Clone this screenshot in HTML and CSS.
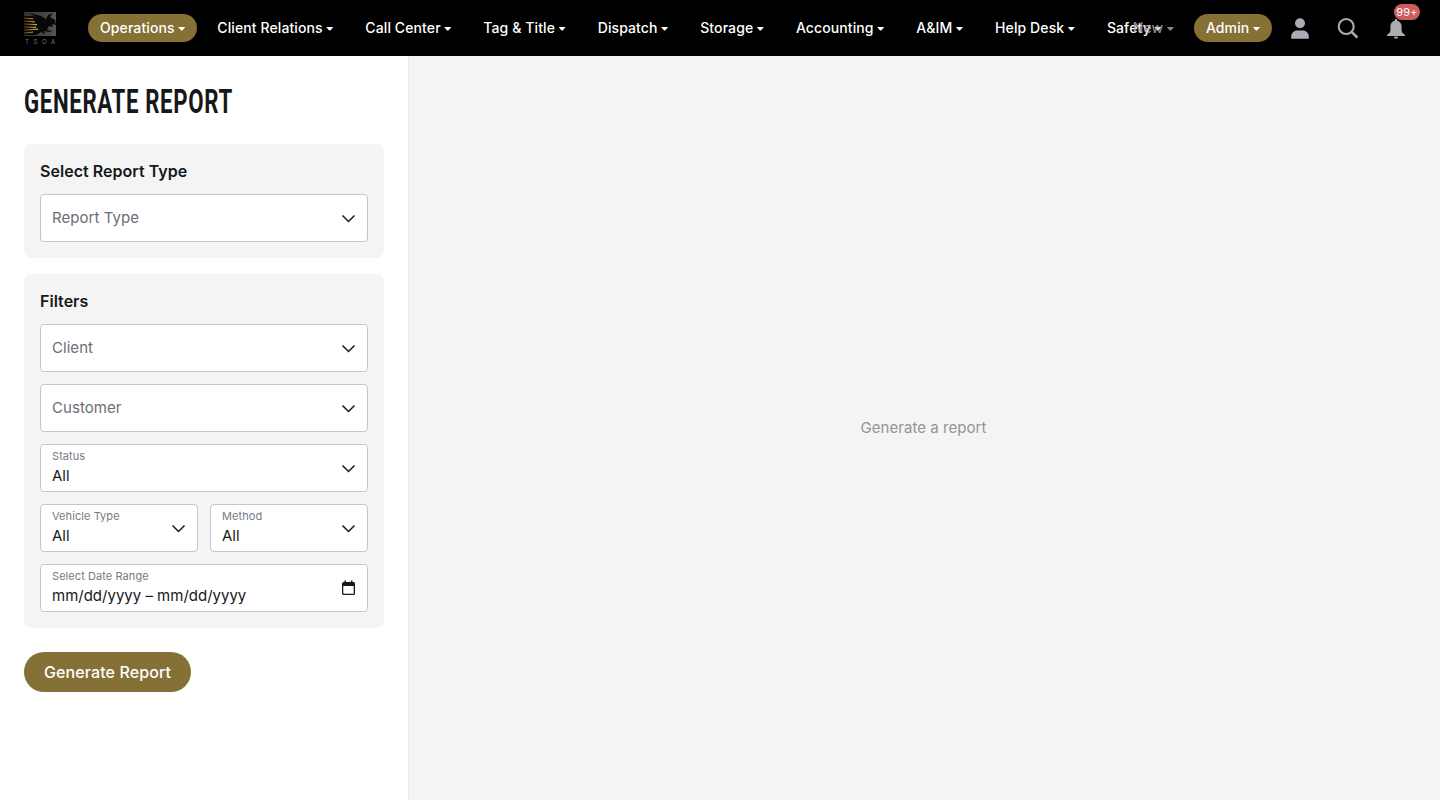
FILE: index.html
```
<!DOCTYPE html>
<html lang="en">
<head>
    <meta charset="UTF-8">
    <meta name="viewport" content="width=device-width, initial-scale=1.0">
    <title>Generate Report</title>
    <link rel="stylesheet" href="styles.css">
</head>
<body>
    <header class="topbar">
        <a class="logo" href="#">
            <svg width="32" height="24" viewBox="0 0 32 24">
                <defs>
                    <linearGradient id="logo-bg"><stop offset="0" stop-color="#303030"/><stop offset="1" stop-color="#545454"/></linearGradient>
                    <linearGradient id="logo-gold" gradientUnits="userSpaceOnUse" x1="0" y1="0" x2="15" y2="0"><stop offset="0" stop-color="#5c4018"/><stop offset=".7" stop-color="#c0933c"/><stop offset="1" stop-color="#dcc48c"/></linearGradient>
                </defs>
                <path fill="url(#logo-bg)" d="M0 0h32v24H0z"/>
                <path fill="#080808" d="M0 4h10L5 1l12 3 5 3 2-4 5-2-3 4 5 3 1 5-4-1 1 3-4-1-2 4 5 1-2 1-6-1 1 3-4-2-5 3H0z"/>
                <path fill="none" stroke="url(#logo-gold)" stroke-width="1.2" d="M0 6l9 .8M0 9l11 .8M0 12l13 .6M0 15l12 .4M0 18l14-.8M0 21l9-.9"/>
            </svg>
            <span class="logo-text">TSOA</span>
        </a>
        <nav class="nav">
            <a class="nav-item active" href="#">Operations</a>
            <a class="nav-item" href="#">Client Relations</a>
            <a class="nav-item" href="#">Call Center</a>
            <a class="nav-item" href="#">Tag &amp; Title</a>
            <a class="nav-item" href="#">Dispatch</a>
            <a class="nav-item" href="#">Storage</a>
            <a class="nav-item" href="#">Accounting</a>
            <a class="nav-item" href="#">A&amp;IM</a>
            <a class="nav-item" href="#">Help Desk</a>
            <a class="nav-item" href="#">Safety</a>
        </nav>
        <div class="tools">
            <a class="nav-item muted" href="#">New</a>
            <a class="nav-item active" href="#">Admin</a>
            <a class="tool" href="#">
                <svg width="24" height="24" viewBox="0 0 24 24" fill="#a9acb2">
                    <circle cx="12" cy="7.3" r="5"/>
                    <path d="M3.2 22.7v-1.9c0-3.8 2.5-6.3 6-6.3h5.6c3.5 0 6 2.5 6 6.3v1.9z"/>
                </svg>
            </a>
            <a class="tool" href="#">
                <svg width="24" height="24" viewBox="0 0 24 24" fill="none" stroke="#a9acb2" stroke-width="2.1">
                    <circle cx="10.2" cy="10.5" r="7.5"/>
                    <path stroke-width="2.6" d="M15.3 15.6l6.1 6.1"/>
                </svg>
            </a>
            <a class="tool" href="#">
                <svg width="24" height="24" viewBox="0 0 24 24" fill="#a9acb2">
                    <path d="M12 3c.8 0 1.3.5 1.3 1.3v.4c2.6.6 4.3 2.7 4.3 5.6v4.2c0 1.6 1 2.4 2.4 3.6.8.7 1 1.1 1 1.9H3c0-.8.2-1.2 1-1.9 1.400-1.200 2.400-2 2.400-3.600v-4.200c0-2.900 1.700-5 4.300-5.600v-.4C10.700 3.500 11.200 3 12 3zM9.700 20.800h4.600c-.2 1.300-1.100 2-2.300 2s-2.100-.7-2.300-2z"/>
                </svg>
                <span class="badge">99+</span>
            </a>
        </div>
    </header>
    <main class="page">
        <aside class="sidebar">
            <h1><span>GENERATE REPORT</span></h1>
            <section class="card">
                <h2>Select Report Type</h2>
                <div class="field">
                    <span class="placeholder">Report Type</span>
                    <svg class="chevron" viewBox="0 0 16 16"><path d="M2.5 5.5l6 6 6-6"/></svg>
                </div>
            </section>
            <section class="card">
                <h2>Filters</h2>
                <div class="field">
                    <span class="placeholder">Client</span>
                    <svg class="chevron" viewBox="0 0 16 16"><path d="M2.5 5.5l6 6 6-6"/></svg>
                </div>
                <div class="field">
                    <span class="placeholder">Customer</span>
                    <svg class="chevron" viewBox="0 0 16 16"><path d="M2.5 5.5l6 6 6-6"/></svg>
                </div>
                <div class="field">
                    <div class="labeled"><label>Status</label><span>All</span></div>
                    <svg class="chevron" viewBox="0 0 16 16"><path d="M2.5 5.5l6 6 6-6"/></svg>
                </div>
                <div class="row">
                    <div class="field">
                        <div class="labeled"><label>Vehicle Type</label><span>All</span></div>
                        <svg class="chevron" viewBox="0 0 16 16"><path d="M2.5 5.5l6 6 6-6"/></svg>
                    </div>
                    <div class="field">
                        <div class="labeled"><label>Method</label><span>All</span></div>
                        <svg class="chevron" viewBox="0 0 16 16"><path d="M2.5 5.5l6 6 6-6"/></svg>
                    </div>
                </div>
                <div class="field">
                    <div class="labeled"><label>Select Date Range</label><span>mm/dd/yyyy – mm/dd/yyyy</span></div>
                    <svg class="calendar" width="13" height="16" viewBox="0 0 13 16">
                        <path fill="#171819" fill-rule="evenodd" d="M2.5.5H4V2h5V.5h1.5V2h1A1.5 1.5 0 0 1 13 3.5v10a1.5 1.5 0 0 1-1.5 1.5h-10A1.5 1.5 0 0 1 0 13.5v-10A1.5 1.5 0 0 1 1.5 2h1zM1.300 6v7.700h10.400V6z"/>
                    </svg>
                </div>
            </section>
            <button class="submit" type="button">Generate Report</button>
        </aside>
        <section class="content">Generate a report</section>
    </main>
</body>
</html>
```
FILE: styles.css
```
* {
    box-sizing: border-box;
}
body {
    font-family: Inter, "Liberation Sans", sans-serif;
    font-size: 15px;
    color: #171819;
    background: #fff;
    margin: 0;
    height: 100vh;
    display: flex;
    flex-direction: column;
    overflow: hidden;
}
a {
    text-decoration: none;
}
.topbar {
    height: 56px;
    background: #000;
    display: flex;
    align-items: center;
    padding: 0 24px;
    flex: none;
}
.logo {
    width: 32px;
    height: 32px;
    margin-right: 32px;
    flex: none;
}
.logo svg {
    display: block;
}
.logo-text {
    display: block;
    font-size: 6px;
    line-height: 7px;
    padding: 2px 0 0 1px;
    letter-spacing: 4.6px;
    color: #777;
    white-space: nowrap;
}
.nav {
    display: flex;
    gap: 8px;
    flex: 1;
    min-width: 0;
}
.nav-item {
    display: flex;
    align-items: center;
    height: 28px;
    padding: 0 12px 1px;
    border-radius: 14px;
    color: #fff;
    font-size: 14px;
    font-weight: 500;
    letter-spacing: 0.1px;
    white-space: nowrap;
    flex: none;
}
.nav-item::after {
    content: "";
    width: 7.2px;
    height: 4px;
    margin: 2px 0 0 3.5px;
    background: #fff;
    clip-path: polygon(0 0, 100% 0, 100% 15%, 58% 100%, 42% 100%, 0 15%);
}
.nav-item.active {
    background: #857036;
}
.nav-item.muted {
    color: #a9acb2;
    opacity: 0.8;
}
.nav-item.muted::after {
    background: #a9acb2;
}
.tools {
    display: flex;
    align-items: center;
    gap: 8px;
    flex: none;
}
.tool {
    position: relative;
    width: 40px;
    height: 40px;
    display: flex;
    align-items: center;
    justify-content: center;
}
.badge {
    position: absolute;
    top: -4px;
    left: 18px;
    width: 26px;
    height: 16px;
    border-radius: 8px;
    background: #cd5c5c;
    color: #fff;
    font-size: 11px;
    line-height: 16px;
    text-align: center;
    letter-spacing: 0.2px;
}
.page {
    display: flex;
    flex: 1;
    min-height: 0;
}
.sidebar {
    width: 409px;
    padding: 24px;
    border-right: 1px solid #e9eaeb;
    flex: none;
}
h1 {
    font-family: Roboto, sans-serif;
    font-size: 32.5px;
    font-weight: 700;
    line-height: 44px;
    margin: 0 0 20px;
    white-space: nowrap;
}
/* condensed heading */
h1 span {
    display: inline-block;
    letter-spacing: 0.9px;
    transform: scaleX(0.685);
    transform-origin: left;
}
.card {
    background: #f4f4f4;
    border-radius: 8px;
    padding: 16px;
    margin-bottom: 16px;
    display: flex;
    flex-direction: column;
    gap: 12px;
}
h2 {
    font-size: 16px;
    font-weight: 600;
    line-height: 22px;
    letter-spacing: 0.03px;
    margin: 0;
}
.field {
    display: flex;
    align-items: center;
    justify-content: space-between;
    height: 48px;
    padding: 0 11px;
    background: #fff;
    border: 1px solid #c5c6c8;
    border-radius: 4px;
}
.placeholder {
    color: #6b6e74;
    padding-bottom: 2px;
    letter-spacing: 0.05px;
}
.labeled {
    display: flex;
    flex-direction: column;
    line-height: 22px;
    white-space: nowrap;
}
.labeled label {
    font-size: 11px;
    line-height: 16px;
    margin: -1px 0 1px;
    color: #767a85;
    letter-spacing: 0.07px;
}
.chevron {
    width: 16px;
    height: 16px;
    fill: none;
    stroke: #171819;
    stroke-width: 1.5;
}
.calendar {
    margin-right: 1px;
}
.row {
    display: grid;
    grid-template-columns: 1fr 1fr;
    gap: 12px;
}
.submit {
    display: block;
    width: 167px;
    height: 40px;
    margin-top: 24px;
    padding: 0;
    border: none;
    border-radius: 20px;
    background: #857036;
    color: #fff;
    font-family: inherit;
    font-size: 16px;
    font-weight: 500;
    letter-spacing: 0.1px;
}
.content {
    flex: 1;
    display: flex;
    align-items: center;
    justify-content: center;
    background: #f4f4f4;
    color: #92959b;
    padding: 0 2px 2px 0;
    letter-spacing: 0.05px;
}
```
